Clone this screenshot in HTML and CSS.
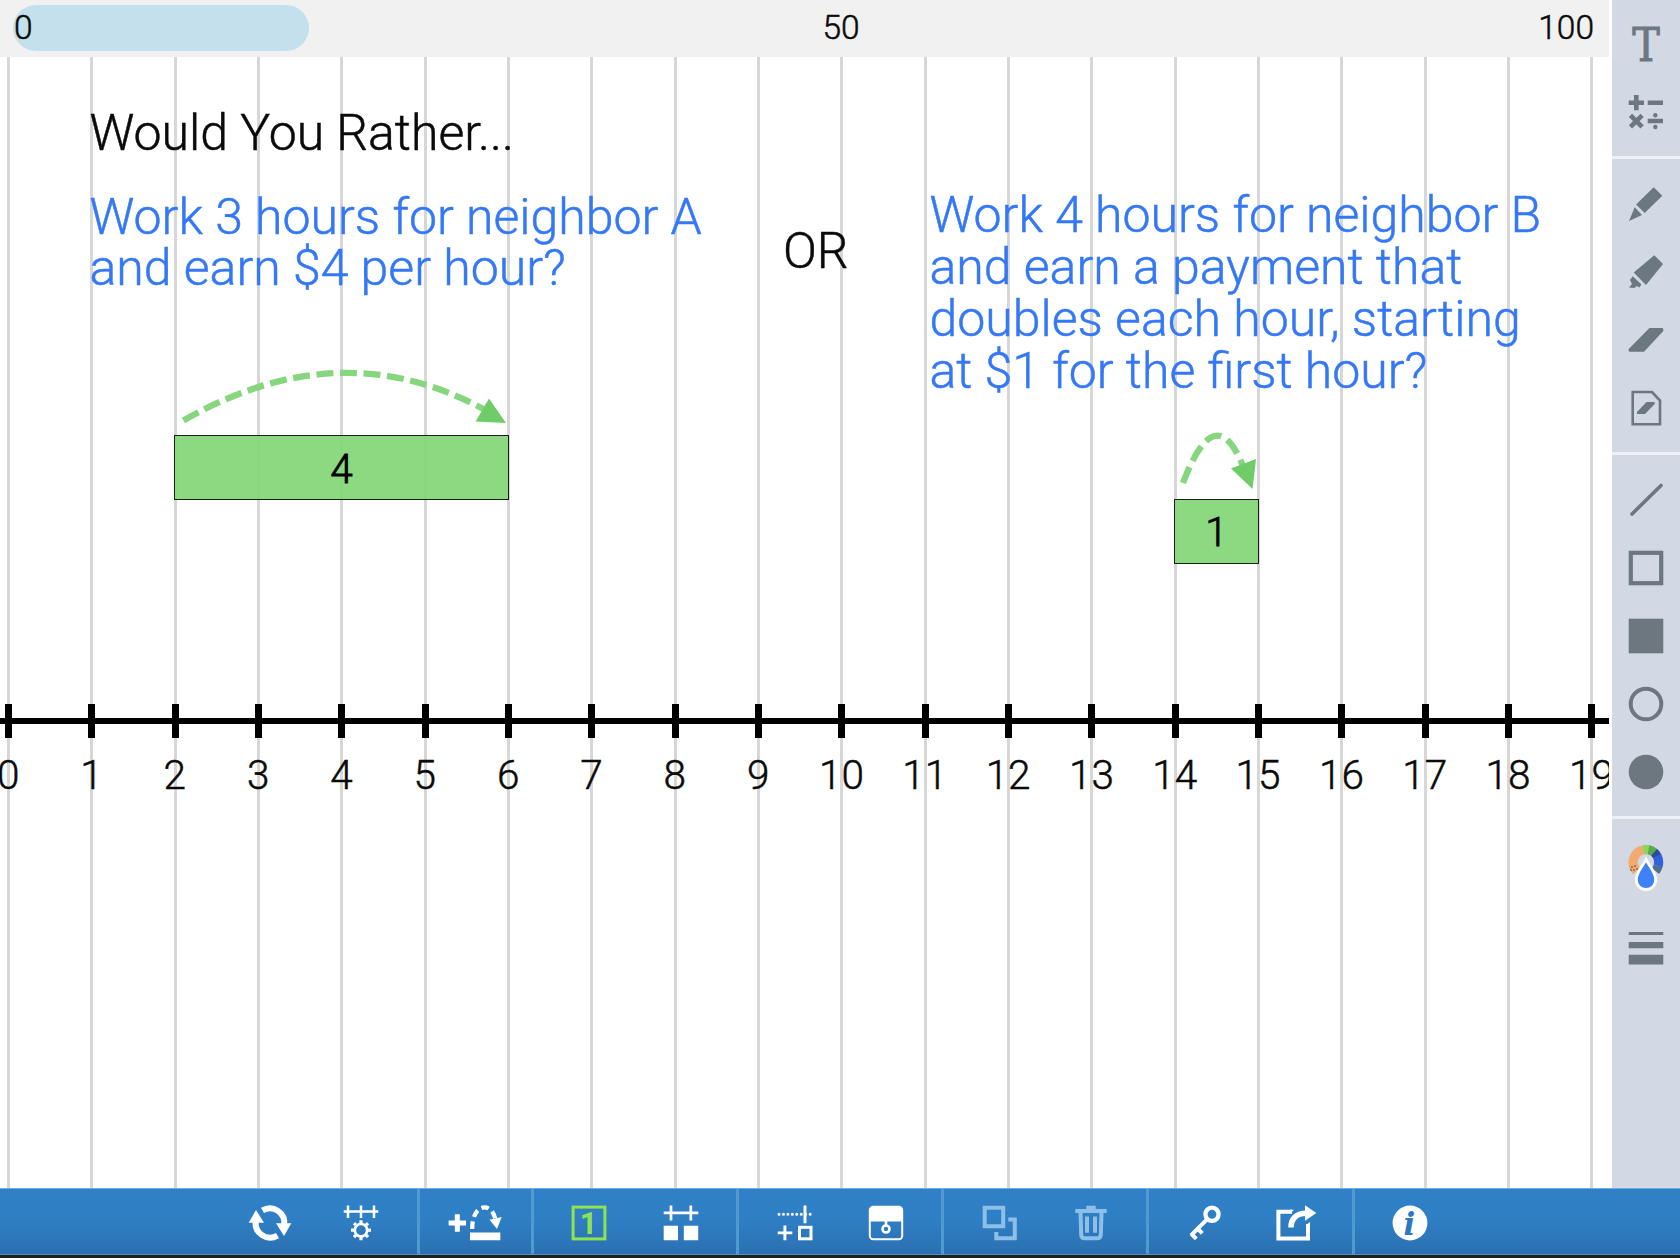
FILE: index.html
```html
<!DOCTYPE html>
<html lang="en">
<head>
<meta charset="utf-8">
<title>Number Line</title>
<link rel="stylesheet" href="styles.css">
</head>
<body>
<div class="app">
  <div class="workspace">
    <main class="stage">
      <header class="ruler">
        <div class="ruler-window"></div>
        <span class="ruler-start">0</span><span class="ruler-mid">50</span><span class="ruler-end">100</span>
      </header>
      <section class="board">
        <div class="note title">Would You Rather...</div>
        <div class="note choice-a">Work 3 hours for neighbor A<br>and earn $4 per hour?</div>
        <div class="note or">OR</div>
        <div class="note choice-b">Work 4 hours for neighbor B<br>and earn a payment that<br>doubles each hour, starting<br>at $1 for the first hour?</div>
        <svg class="jump jump-four" viewBox="170 360 350 70"><path class="arc" stroke-dasharray="17 6.6" d="M183.500 420.500Q345 328 494 415"/><path class="head" d="M489 398.500L506 423L475.500 421.500Z"/></svg>
        <svg class="jump jump-one" viewBox="1170 425 100 70"><path class="arc" stroke-dasharray="17 7" d="M1183 483Q1217 393 1246 474"/><path class="head" d="M1231 468.500L1256 459L1252.500 489Z"/></svg>
        <div class="block block-four">4</div>
        <div class="block block-one">1</div>
        <div class="line"></div>
        <div class="ticks"></div>
        <div class="labels"><span>0</span><span>1</span><span>2</span><span>3</span><span>4</span><span>5</span><span>6</span><span>7</span><span>8</span><span>9</span><span>10</span><span>11</span><span>12</span><span>13</span><span>14</span><span>15</span><span>16</span><span>17</span><span>18</span><span>19</span></div>
      </section>
    </main>
    <aside class="tools">
      <div class="tool-group first">
        <svg class="tool" viewBox="-18 -18 36 36"><text class="letter-t" transform="scale(.88 1)" x="0" y="17">T</text></svg>
        <svg class="tool" viewBox="-18 -18 36 36"><path class="s" stroke-width="4.600" d="M-17.300 -9.300H-2M-9.700 -17V-1.700M1.700 -9.300H17M1.700 9H17M-15.500 3.300L-3.900 14.800M-3.900 3.300L-15.500 14.800"/><circle cx="9.300" cy="3.200" r="2.200"/><circle cx="9.300" cy="15" r="2.200"/></svg>
      </div>
      <div class="tool-group second">
        <svg class="tool" viewBox="-18 -18 36 36"><path d="M7.700 -16.700L16.300 -8.300L-1.300 9L-9.900 .5ZM-11.300 3.300L-4 11L-17 17Z"/></svg>
        <svg class="tool" viewBox="-18 -18 36 36"><path d="M8.300 -16.700L17 -8L0 13L-12.300 .5ZM-13.300 4.300L-4.700 12.300L-6.300 15.500L-9.500 14L-11.500 16L-17 15.500L-14 12L-16 8Z"/></svg>
        <svg class="tool" viewBox="-18 -18 36 36"><path d="M3.500 -12H16Q17.300 -12 17.300 -10.500V-9L-2 11.700H-16Q-17.300 11.700 -17.300 10.500V9Z"/></svg>
        <svg class="tool" viewBox="-18 -18 36 36"><path class="s" stroke-width="2.600" d="M-13.300 -16H6L14 -7.500V16.200H-13.300Z"/><path d="M.5 -6H8.700V-4L-1 6H-9V4Z"/></svg>
      </div>
      <div class="tool-group third">
        <svg class="tool" viewBox="-18 -18 36 36"><path class="s" stroke-width="3.600" stroke-linecap="round" d="M-14 14L15 -14.500"/></svg>
        <svg class="tool" viewBox="-18 -18 36 36"><rect class="s" stroke-width="4.200" x="-15.200" y="-15.200" width="30.400" height="30.400"/></svg>
        <svg class="tool" viewBox="-18 -18 36 36"><rect x="-17.300" y="-17.300" width="34.600" height="34.600"/></svg>
        <svg class="tool" viewBox="-18 -18 36 36"><circle class="s" stroke-width="4" r="15.300"/></svg>
        <svg class="tool" viewBox="-18 -18 36 36"><circle r="17.300"/></svg>
      </div>
      <div class="tool-group fourth">
        <svg class="tool" viewBox="-18 -23 36 48">
          <g fill="none" stroke-width="9.200"><path stroke="#f2aa6e" d="M-9.500 3A12.700 12.700 0 0 1 -2 -18.200"/><path stroke="#8bd660" d="M-2.500 -18.200A12.700 12.700 0 0 1 3 -18.100"/><path stroke="#5cab48" d="M2.500 -18.200A12.700 12.700 0 0 1 8.200 -15.500"/><path stroke="#284f9d" d="M8 -15.700A12.700 12.700 0 0 1 11.300 -11.500"/><path stroke="#315fdf" d="M11.100 -11.900A12.700 12.700 0 0 1 12 -2"/><path stroke="#4d6f91" d="M12.100 -2.300A12.700 12.700 0 0 1 9.500 3"/></g>
          <g fill="#222"><circle cx="-14" cy="-1" r=".7"/><circle cx="-11" cy="-2" r=".7"/><circle cx="-12" cy="2" r=".7"/><circle cx="-9" cy="1" r=".7"/><circle cx="-15" cy="2" r=".7"/></g>
          <path fill="#3e82f7" stroke="#fff" stroke-width="2.800" d="M0 -8.500C3 -2 9.700 4 9.700 11.800A9.700 9.700 0 0 1 -9.700 11.800C-9.700 4 -3 -2 0 -8.500Z"/>
        </svg>
        <svg class="tool" viewBox="-18 -18 36 36"><path d="M-17.300 -16H17.300V-13H-17.300ZM-17.300 -6H17.300V.3H-17.300ZM-17.300 6.800H17.300V16.500H-17.300Z"/></svg>
      </div>
    </aside>
  </div>
  <nav class="bar">
    <div class="group">
      <svg class="action" viewBox="-30 -18 60 36"><g id="turn"><path class="w" stroke-width="6" d="M-7.500 -12.600A14.500 14.500 0 0 1 14.200 2"/><path d="M6 .2H21.300L14 13Z"/></g><use href="#turn" transform="rotate(180)"/></svg>
      <svg class="action" viewBox="-30 -18 60 36"><path class="w" stroke-width="2.500" d="M-17.300 -11.500H17.300M-13 -17.500V-5M0 -17.500V-5M13 -17.500V-5"/><circle class="w" stroke-width="2.700" cy="7.200" r="6.200"/><path class="w" stroke-width="3.200" d="M0 -2.800V.5M0 14V17.200M-10 7.200H-7M7 7.200H10M-7 .2L-5 2.200M7 .2L5 2.200M-7 14.200L-5 12.200M7 14.200L5 12.200"/></svg>
    </div>
    <div class="group">
      <svg class="action" viewBox="-30 -18 60 36"><path class="w" stroke-width="5" d="M-26.400 0H-9M-17.700 -8.700V8.700"/><path class="w" stroke-width="4.200" stroke-dasharray="7.500 4.600" d="M-2.800 6C-3 -20 17 -22 20.500 -3"/><path d="M14.500 -3.300L26.700 -6L22 6ZM-5 9.500H25.300V17.200H-5Z"/></svg>
    </div>
    <div class="group">
      <svg class="action lime" viewBox="-30 -18 60 36"><rect class="lime-line" x="-15.900" y="-15.900" width="31.800" height="31.800"/><text class="numeral" x="-.5" y="11">1</text></svg>
      <svg class="action" viewBox="-30 -18 60 36"><path class="w" stroke-width="2.700" d="M-17.300 -10.200H17.300M-10 -17.500V-2.500M9.800 -17.500V-2.500"/><path d="M-17.300 2.800H-3V17.200H-17.300ZM2.800 2.800H17.200V17.200H2.800Z"/></svg>
    </div>
    <div class="group">
      <svg class="action" viewBox="-30 -18 60 36"><path class="w" stroke-width="3" stroke-linecap="round" stroke-dasharray="0 4.450" d="M-16 -8.800H15.500"/><path class="w" stroke-width="2.900" d="M10 -17.500V.3M-17.300 9.900H-2.700M-10.100 2.600V17.200"/><rect class="w" stroke-width="3" x="4.500" y="4.300" width="11.500" height="11.500"/></svg>
      <svg class="action" viewBox="-30 -18 60 36"><rect class="w" stroke-width="2" x="-16.200" y="-16.300" width="32.400" height="32.600" rx="3.500"/><path d="M-16 -1.500V-13Q-16 -16 -13 -16H13Q16 -16 16 -13V-1.500Z"/><circle class="w" stroke-width="2.600" cy="6" r="3.500"/><path class="w" stroke-width="2.600" d="M0 -2V2.500"/></svg>
    </div>
    <div class="group">
      <svg class="action faded" viewBox="-30 -18 60 36"><path class="w" stroke-width="4" d="M-15.300 -15.300H3.200V3.200H-15.300ZM8.300 -3.500H14.800V15.200H-3.700V9"/></svg>
      <svg class="action faded" viewBox="-30 -18 60 36"><path class="w" stroke-width="4" d="M-15.700 -12H15.700M-10.500 -11L-9.800 12Q-9.500 15.200 -6.500 15.200H6.500Q9.500 15.200 9.800 12L10.500 -11M-4 -6.500V9.800M4 -6.500V9.800"/><path d="M-4.700 -17.300H4.700V-12H-4.700Z"/></svg>
    </div>
    <div class="group">
      <svg class="action" viewBox="-30 -18 60 36"><circle class="w" stroke-width="4.300" cx="7" cy="-8.700" r="6.600"/><path class="w" stroke-width="4" d="M2.500 -4.200L-14 12.300M-13.500 11L-8.700 15.800M-7.500 5.500L-2.700 10.300"/></svg>
      <svg class="action" viewBox="-30 -18 60 36"><path class="w" stroke-width="4" d="M-4 -11.200H-17.600V15.500H12V1"/><path d="M-6 -13.200H-2L-6 -9.200ZM10 2L14 -1V3H10Z"/><path class="w" stroke-width="5.600" d="M-5 4.500C-5 -4 0 -9.800 10 -9.800"/><path d="M9 -17.700L20.300 -9.900L9 -2.200Z"/></svg>
    </div>
    <div class="group">
      <svg class="action" viewBox="-30 -18 60 36"><circle r="17.400"/><text class="info" x="-.5" y="11.500">i</text></svg>
    </div>
  </nav>
</div>
</body>
</html>
```
FILE: styles.css
```css
* { box-sizing: border-box; }

body {
  margin: 0;
  background: #fff;
  color: #0a0a0a;
  font-family: Roboto, "Liberation Sans", sans-serif;
  font-weight: 300;
}

.app {
  display: flex;
  flex-direction: column;
  width: 1680px;
  height: 1258px;
  overflow: hidden;
  background: #221f1c;
}

.workspace {
  display: flex;
  gap: 3px;
  height: 1188px;
  background: #fff;
  -webkit-text-stroke: .5px;
}

.stage {
  display: flex;
  flex-direction: column;
  width: 1609px;
  overflow: hidden;
}

/* Range overview */
.ruler {
  position: relative;
  display: grid;
  grid-template-columns: 1fr auto 1fr;
  align-items: center;
  height: 57px;
  padding: 0 15px 2px 14px;
  background: #f1f1f1;
  font-size: 33.5px;
}

.ruler-window {
  position: absolute;
  left: 13px;
  top: 5px;
  width: 296px;
  height: 46px;
  border-radius: 23px;
  background: #c4e0ed;
}

.ruler-start, .ruler-mid, .ruler-end { position: relative; }
.ruler-mid { left: 37px; }
.ruler-end { text-align: right; }

/* Number line canvas */
.board {
  --step: 83.333px;
  position: relative;
  flex: 1;
  overflow: hidden;
  background: repeating-linear-gradient(90deg, #d7d7d7 0 3px, transparent 3px var(--step)) 6.500px 0 / 1700px 100% no-repeat;
}

.note {
  position: absolute;
  font-size: 50px;
  line-height: 52px;
  white-space: nowrap;
}

.title { left: 89.500px; top: 50px; }
.choice-a { left: 89.500px; top: 135px; line-height: 51px; color: #3478f6; }
.or { left: 783px; top: 168px; }
.choice-b { left: 929.500px; top: 132px; color: #3478f6; }

.block {
  position: absolute;
  display: flex;
  align-items: center;
  justify-content: center;
  height: 65px;
  padding-top: 2px;
  border: 1.500px solid #1d1d1d;
  background: rgba(131, 214, 120, .93);
  font-size: 40.500px;
  color: #000;
  -webkit-text-stroke: .8px;
}

.block-four { left: 174px; top: 378px; width: 335px; }
.block-one { left: 1174px; top: 441.500px; width: 85px; }

.jump { position: absolute; }
.jump-four { left: 170px; top: 303px; width: 350px; height: 70px; }
.jump-one { left: 1170px; top: 368px; width: 100px; height: 70px; }
.arc { fill: none; stroke: #86d67d; stroke-width: 6.300px; }
.head { fill: #70cc69; }

.line {
  position: absolute;
  left: 0;
  top: 660.500px;
  width: 100%;
  height: 6.500px;
  background: #000;
}

.ticks {
  position: absolute;
  left: 4.500px;
  top: 646.500px;
  width: 1610px;
  height: 34px;
  background: repeating-linear-gradient(90deg, #000 0 7px, transparent 7px var(--step));
}

.labels {
  position: absolute;
  left: -33.500px;
  top: 694px;
  display: flex;
  font-size: 40.500px;
  line-height: 48px;
  text-align: center;
}

.labels span { flex: none; width: var(--step); }

/* Drawing tools */
.tools {
  display: flex;
  flex-direction: column;
  width: 68px;
  background: #d2d9e4;
  fill: #6c7780;
}

.tool-group {
  display: flex;
  flex-direction: column;
  align-items: center;
  gap: 32px;
  border-bottom: 3px solid #edf2f6;
}

.tool { width: 36px; height: 36px; }
.s { fill: none; stroke: #6c7780; }
.first { height: 159px; padding-top: 26px; }
.second { height: 296px; padding-top: 26.500px; }
.third { height: 364px; padding-top: 26.500px; }
.fourth { gap: 37px; padding-top: 26px; border: 0; }
.fourth .tool:first-child { height: 48px; }

.letter-t {
  font: 47px "DejaVu Serif", serif;
  text-anchor: middle;
  stroke: #6c7780;
  stroke-width: 1px;
}

/* Bottom command bar */
.bar {
  display: flex;
  height: 67px;
  padding-left: 214.800px;
  border-top: 1px solid #68afe0;
  border-bottom: 1px solid #4796d0;
  background: linear-gradient(#3080c7, #2f7fc5 45%, #2b70b1);
  fill: #fff;
}

.group {
  display: flex;
  align-items: center;
  padding: 0 9.900px;
  border-right: 3px solid #4f9bd0;
}

.group:last-child { border: 0; }
.action { width: 60px; height: 36px; margin: 2px 15.600px 0; overflow: visible; }
.w { fill: none; stroke: #fff; }
.lime { fill: #8fe34e; }
.lime-line { fill: none; stroke: #8fe34e; stroke-width: 3px; }
.faded { fill: #8dbfe9; }
.faded .w { stroke: #8dbfe9; }

.numeral {
  font: bold 30.500px Roboto, sans-serif;
  text-anchor: middle;
}

.info {
  font: italic bold 31px "DejaVu Serif", serif;
  text-anchor: middle;
  fill: #2d79bd;
}
```
